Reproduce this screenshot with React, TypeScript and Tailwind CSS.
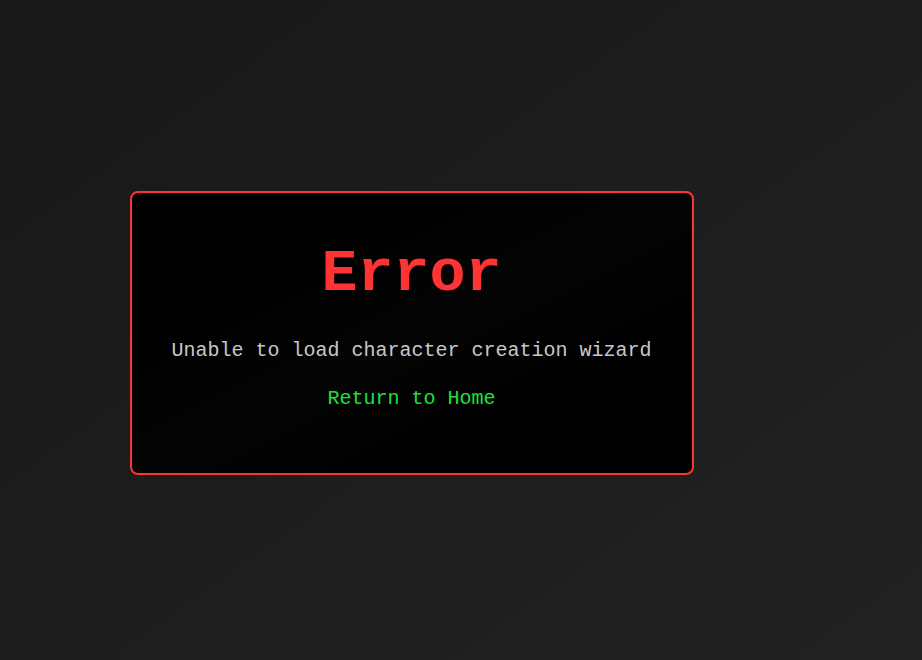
import React from 'react';

export default function App() {
  return (
    <div className="min-h-screen bg-gradient-to-br from-[#181818] to-[#222222] flex items-center justify-center pr-[99px] pt-[6px] font-['Liberation_Mono','Courier_New',monospace]">
      <div className="w-[564px] h-[284px] rounded-lg border-2 border-[#ff3333] bg-gradient-to-br from-[#000000] via-[#050505] to-[#000000] pt-[51px] pb-[59px] px-8 flex flex-col items-center text-center">
        <h1 className="text-6xl leading-none font-bold text-[#ff3333] mb-[33px]">Error</h1>
        <p className="text-xl leading-7 text-[#c4c8d0] mb-[20px]">
          Unable to load character creation wizard
        </p>
        <a href="#" className="text-xl leading-7 text-[#1ee03c]">
          Return to Home
        </a>
      </div>
    </div>
  );
}
